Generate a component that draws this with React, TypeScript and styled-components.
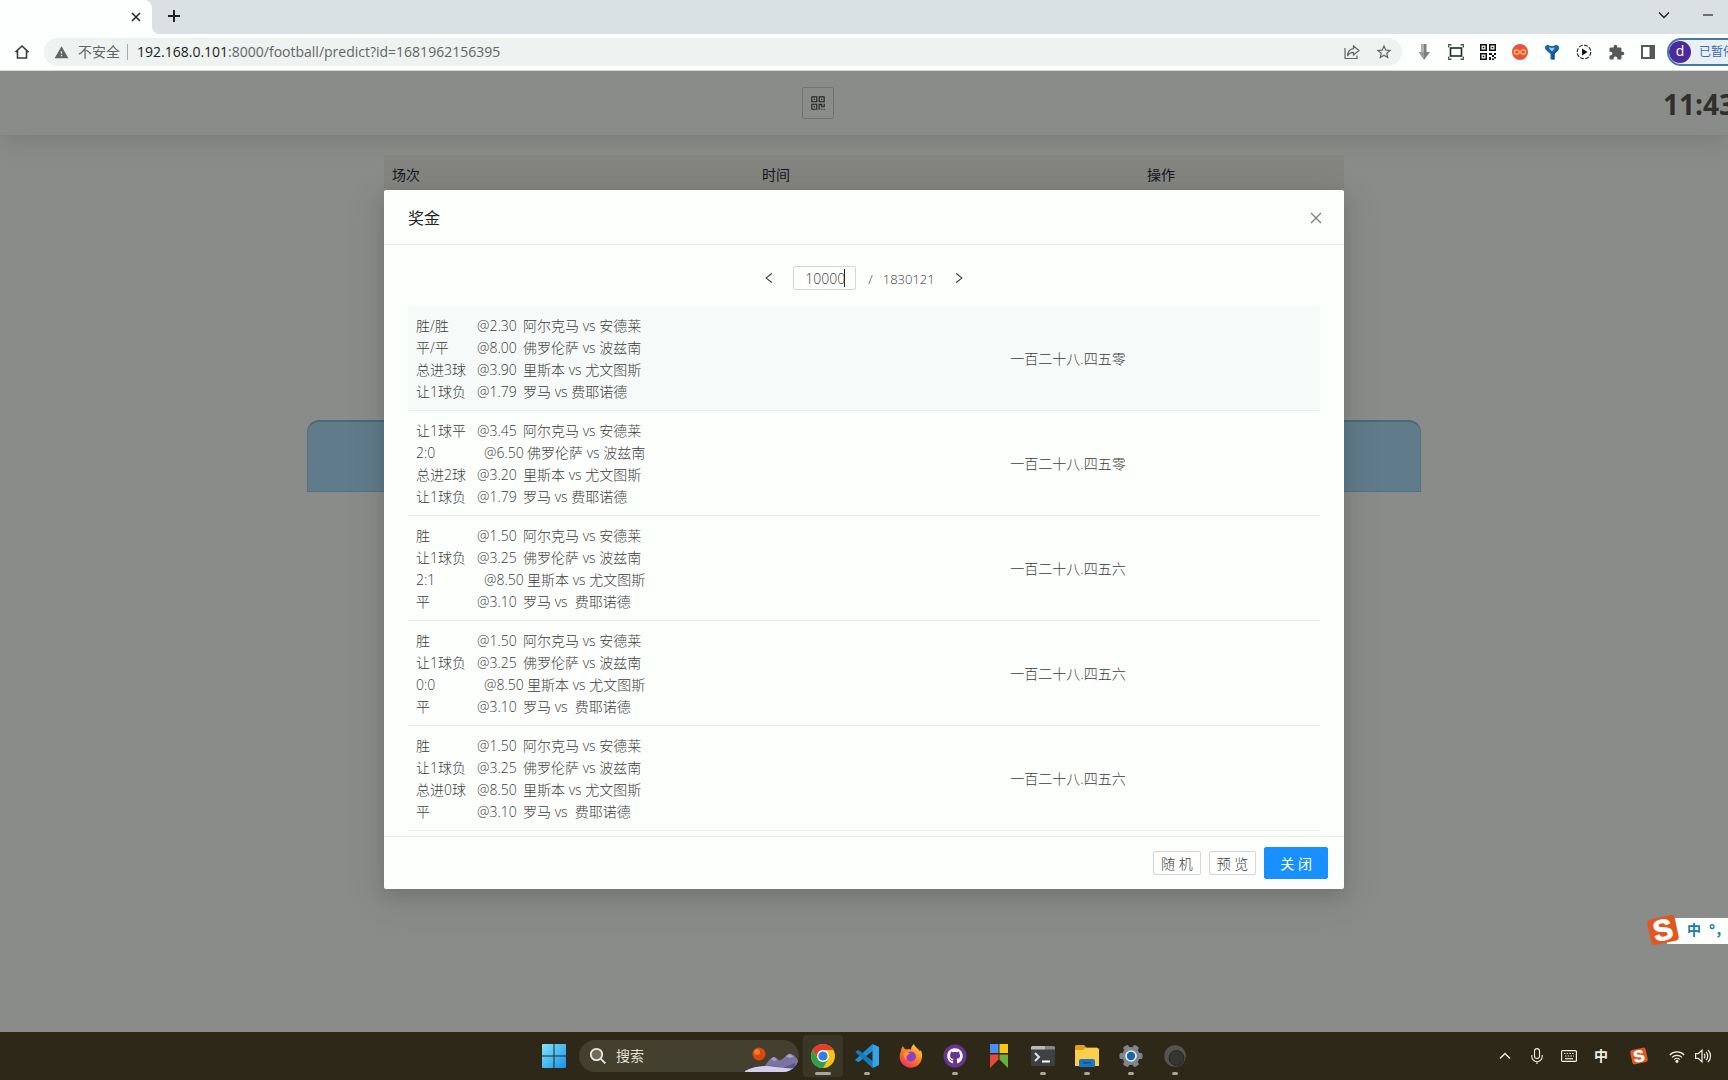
import React from "react";
import styled, { createGlobalStyle } from "styled-components";
import {
  AiOutlineClose,
  AiOutlineLeft,
  AiOutlineRight,
  AiOutlineQrcode,
} from "react-icons/ai";
import { MdExtension, MdWarning, MdStarBorder } from "react-icons/md";
import { FaGithub } from "react-icons/fa";

const GlobalStyle = createGlobalStyle`
  *, *::before, *::after { box-sizing: border-box; }
  body {
    margin: 0;
    overflow: hidden;
    font-family: "Open Sans", "Noto Sans CJK SC", sans-serif;
    font-size: 14px;
    line-height: 22px;
    color: #3a3c3a;
  }
  button, input { font: inherit; color: inherit; }
  svg { display: block; flex: none; overflow: visible; }
`;

const Screen = styled.div`
  display: flex;
  flex-direction: column;
  height: 100vh;
  overflow: hidden;
`;

/* Browser chrome */

const TabStrip = styled.div`
  display: flex;
  height: 34px;
  background: #dae1e4;
  color: #222;
`;

const Tab = styled.div`
  display: flex;
  align-items: center;
  justify-content: flex-end;
  width: 152px;
  padding-right: 9px;
  background: #fdfffe;
  border-radius: 0 8px 0 0;
`;

const TabFoot = styled.div`
  align-self: flex-end;
  width: 8px;
  height: 8px;
  background: radial-gradient(circle at 100% 0, #dae1e4 8px, #fdfffe 8px);
`;

const BareButton = styled.button<{ $w?: number }>`
  display: flex;
  align-items: center;
  justify-content: center;
  flex: none;
  width: ${(p) => p.$w ?? 32}px;
  height: 32px;
  padding: 0;
  border: 0;
  background: none;
`;

const WindowButtons = styled.div`
  display: flex;
  align-items: center;
  gap: 12px;
  margin-left: auto;
  margin-right: 4px;
  height: 30px;
`;

const Toolbar = styled.div`
  display: flex;
  align-items: center;
  height: 37px;
  padding-left: 6px;
  background: #fdfffe;
  border-bottom: 1px solid #d5d9d8;
  overflow: hidden;
`;

const AddressBar = styled.div`
  display: flex;
  align-items: center;
  flex: 1;
  height: 28px;
  margin-left: 6px;
  padding: 0 2px 0 10px;
  border-radius: 14px;
  background: #eef3f2;
  color: #5f6664;
  white-space: nowrap;
`;

const Insecure = styled.span`
  margin-left: 9px;
  padding-right: 7px;
  margin-right: 9px;
  border-right: 1px solid #a5aaa8;
  line-height: 16px;
`;

const Url = styled.span`
  flex: 1;
  b { font-weight: 400; color: #1c2220; }
`;

const Extensions = styled.div`
  display: flex;
  align-items: center;
  margin-left: 6px;
`;

const Profile = styled.button`
  display: flex;
  align-items: center;
  gap: 8px;
  flex: none;
  width: 61px;
  height: 28px;
  margin-left: 3px;
  padding: 0;
  border: 2px solid #4678a8;
  border-right: 0;
  border-radius: 14px 0 0 14px;
  background: #e8f0f6;
  color: #3e6ab4;
  font-size: 12px;
  white-space: nowrap;
  overflow: hidden;
`;

const Avatar = styled.span`
  flex: none;
  width: 22px;
  height: 22px;
  border-radius: 50%;
  background: #4c2a9c;
  color: #fff;
  font-size: 14px;
  line-height: 20px;
  text-align: center;
`;

/* Page */

const Page = styled.div`
  position: relative;
  flex: 1;
  overflow: hidden;
  background: #fafff8;
`;

const PageHeader = styled.header`
  display: grid;
  grid-template-columns: 802fr 32px 829fr 65px;
  align-items: center;
  height: 64px;
  box-shadow: 0 2px 28px rgba(0, 25, 15, 0.16);
`;

const QrButton = styled.button`
  grid-column: 2;
  display: flex;
  align-items: center;
  justify-content: center;
  width: 32px;
  height: 32px;
  padding: 0;
  border: 1px solid #d0d0cc;
  border-radius: 2px;
  background: none;
  color: #444;
`;

const Clock = styled.time`
  grid-column: 4;
  overflow: hidden;
  font-size: 28px;
  line-height: 36px;
  font-weight: 700;
  color: #5a544f;
  white-space: nowrap;
  margin-top: 2px;
`;

const MatchTable = styled.table`
  width: 960px;
  margin: 20px auto 0;
  border-collapse: collapse;
  table-layout: fixed;
  background: #f0f0eb;
  th {
    height: 38px;
    padding: 1px 8px 0;
    text-align: left;
    font-weight: 400;
    color: #222c38;
  }
`;

const Tile = styled.div`
  width: 1114px;
  height: 72px;
  margin: 227px auto 0;
  border: 1px solid #9dd0e8;
  border-top: 2px solid #86c0dc;
  border-radius: 12px 12px 0 0;
  background: #afe0fb;
`;

const Mask = styled.div`
  position: absolute;
  inset: 0;
  background: rgba(0, 0, 0, 0.45);
`;

const Modal = styled.section`
  width: 960px;
  margin: 119px auto 0;
  background: #fdfffd;
  border-radius: 2px;
  box-shadow: 0 6px 16px rgba(0, 0, 0, 0.1), 0 9px 36px 8px rgba(0, 0, 0, 0.08);
  font-weight: 300;
`;

const ModalHeader = styled.header`
  display: flex;
  align-items: center;
  justify-content: space-between;
  height: 55px;
  padding: 2px 12px 0 24px;
  border-bottom: 1px solid #ebedeb;
  color: #808280;
  h2 {
    margin: 0;
    font-size: 16px;
    font-weight: 400;
    color: #222;
  }
`;

const ModalBody = styled.div`
  padding: 21px 24px 5px;
`;

const Pager = styled.div`
  display: flex;
  align-items: center;
  justify-content: center;
  height: 24px;
  margin-bottom: 16px;
`;

const PageField = styled.label`
  position: relative;
  margin: 0 12px 0 8px;
  &::after {
    content: "";
    position: absolute;
    left: 51px;
    top: 3px;
    width: 1px;
    height: 18px;
    background: #222;
  }
  input {
    display: block;
    width: 63px;
    height: 24px;
    padding: 1px 10px 0 11px;
    border: 1px solid #d3d6d4;
    border-radius: 2px;
    background: none;
    outline: 0;
  }
`;

const Total = styled.span`
  display: flex;
  gap: 10px;
  margin-right: 8px;
  padding-top: 1px;
  font-size: 13px;
`;

const PrizeTable = styled.table`
  width: 100%;
  border-collapse: separate;
  border-spacing: 0;
  table-layout: fixed;
`;

const PrizeRow = styled.tr<{ $hover?: boolean }>`
  background: ${(p) => (p.$hover ? "#f6faf8" : "none")};
  td {
    padding: 9px 8px 7px;
    border-bottom: 1px solid #ebedeb;
  }
`;

const Amount = styled.td`
  text-align: center;
`;

const Bet = styled.div`
  display: flex;
  white-space: pre;
`;

const Pick = styled.span<{ $score: boolean }>`
  width: ${(p) => (p.$score ? 68 : 61)}px;
`;

const Odds = styled.span<{ $score: boolean }>`
  width: ${(p) => (p.$score ? 43 : 46)}px;
`;

const ModalFooter = styled.footer`
  display: flex;
  align-items: center;
  justify-content: flex-end;
  gap: 8px;
  padding: 10px 16px;
  border-top: 1px solid #ebedeb;
`;

const Action = styled.button<{ $primary?: boolean }>`
  height: ${(p) => (p.$primary ? 32 : 24)}px;
  padding: 1px ${(p) => (p.$primary ? 15 : 7)}px 0;
  border: 1px solid ${(p) => (p.$primary ? "#1890ff" : "#d3d6d4")};
  border-radius: 2px;
  background: ${(p) => (p.$primary ? "#1890ff" : "none")};
  color: ${(p) => (p.$primary ? "#fff" : "inherit")};
  font-weight: ${(p) => (p.$primary ? 400 : 300)};
  line-height: 20px;
  white-space: nowrap;
`;

const ImeBar = styled.div`
  position: absolute;
  right: 0;
  bottom: 86px;
  display: flex;
  align-items: center;
  gap: 8px;
  width: 81px;
  height: 32px;
  background: linear-gradient(#fdfffe, #fdfffe) 20px 4px / 61px 26px no-repeat;
  color: #1c78b4;
  font-weight: 700;
  white-space: nowrap;
`;

/* Taskbar */

const Taskbar = styled.footer`
  display: flex;
  align-items: center;
  height: 48px;
  padding-left: 532px;
  background: #2d2817;
  color: #f0eee6;
`;

const Search = styled.button`
  display: flex;
  align-items: center;
  width: 220px;
  height: 32px;
  margin: 0 2px 0 3px;
  padding: 0 0 0 10px;
  border: 0;
  border-radius: 16px;
  background: #434030;
  color: #e4e2d8;
  overflow: hidden;
  span { margin: 0 auto 0 9px; }
`;

const AppButton = styled.button<{ $state?: "open" | "active" }>`
  display: flex;
  align-items: center;
  justify-content: center;
  position: relative;
  flex: none;
  width: 40px;
  height: 42px;
  margin: 0 2px;
  padding: 0;
  border: 0;
  border-radius: 4px;
  background: ${(p) => (p.$state === "active" ? "#3b3727" : "none")};
  &::after {
    content: "";
    position: absolute;
    bottom: 2px;
    width: ${(p) => (p.$state === "active" ? 16 : p.$state ? 6 : 0)}px;
    height: 3px;
    border-radius: 2px;
    background: #a8a59a;
  }
`;

const Tray = styled.div`
  display: flex;
  align-items: center;
  margin-left: auto;
  margin-right: 15px;
`;

const ImeMode = styled.span`
  width: 32px;
  text-align: center;
  font-weight: 700;
`;

/* Drawings */

const line = { fill: "none", stroke: "currentColor" } as const;

const HomeIcon = () => (
  <svg width="16" height="16" viewBox="0 0 16 16" {...line} strokeWidth="1.6">
    <path d="M1.500 8.200 8 2l6.500 6.200M3.500 7v7h9V7" />
  </svg>
);

const ShareIcon = () => (
  <svg width="16" height="16" viewBox="0 0 16 16" {...line} strokeWidth="1.200">
    <path d="M1 4v10.500h12v-3M9.500 2l5.500 4.500L9.500 11V8.300C6.500 8.300 4.800 9.500 3.500 12 3.800 7.500 6 5 9.500 4.700Z" />
  </svg>
);

const ArrowDownIcon = () => (
  <svg width="12" height="16" viewBox="0 0 12 16">
    <path fill="#b0b2b1" d="M3 0h4v8H3z" />
    <path fill="#7d807f" d="M6 0h2.500v8H12l-6 8z" />
    <path fill="#979a99" d="M3 8H.5L6 16V8z" />
  </svg>
);

const CaptureIcon = () => (
  <svg width="16" height="16" viewBox="0 0 16 16" fill="none">
    <rect x="2.500" y="4" width="11" height="8" stroke="#1f2b22" strokeWidth="1.600" />
    <path d="M.7 3.500V.7h2.800M12.500.7h2.800v2.800M15.300 12.500v2.800h-2.800M3.500 15.300H.7v-2.800" stroke="#3f6b46" strokeWidth="1.400" />
  </svg>
);

const QrIcon = () => (
  <svg width="16" height="16" viewBox="0 0 16 16" fill="#111">
    <path fillRule="evenodd" d="M0 0h7v7H0zM1.500 1.500v4h4v-4zM9 0h7v7H9zM10.500 1.500v4h4v-4zM0 9h7v7H0zM1.500 10.500v4h4v-4z" />
    <path d="M2.700 2.700h1.600v1.600H2.700zM11.700 2.700h1.600v1.600h-1.600zM2.700 11.700h1.600v1.600H2.700zM9 9h3v2H9zM12 11h2v2h-2zM14 9h2v2h-2zM9 13h2v3H9zM14 13h2v1.500h-2zM12 14.500h2V16h-2z" />
  </svg>
);

const InfinityIcon = () => (
  <svg width="16" height="16" viewBox="0 0 16 16" fill="none">
    <circle cx="8" cy="8" r="8" fill="#ea4f47" />
    <path d="M8 8C6.500 6 5.500 5.700 4.700 5.700a2.300 2.300 0 0 0 0 4.600C5.500 10.300 6.500 10 8 8s2.500-2.300 3.300-2.300a2.300 2.300 0 0 1 0 4.600C10.500 10.300 9.500 10 8 8Z" stroke="#ffb84a" strokeWidth="1.500" />
  </svg>
);

const YIcon = () => (
  <svg width="16" height="16" viewBox="0 0 16 16">
    <path fill="#1c64a8" d="M1 3C2 .8 4 .8 5.500 1.500 7 2.500 9 2.500 10.500 1.500 12 .8 14 .8 15 3c.8 2.500-2 4.500-4.500 7v5.500h-4V10C4 7.500.2 5.500 1 3Z" />
    <path fill="#8fd0f0" d="M5 3c1 .7 2 1 3 1s1.700-.3 2.500-.8c0 1.600-1 3-2.500 4-1.500-1-3-2.400-3-4.200Z" />
    <path fill="#174a80" d="M8.500 10c2-2 4-3.500 6-5.500-.5 2-2.500 3.500-4 5.500v5.500h-2Z" />
  </svg>
);

const PlayIcon = () => (
  <svg width="16" height="16" viewBox="0 0 16 16">
    <circle cx="8" cy="8" r="6.800" fill="none" stroke="#222" strokeWidth="1.100" strokeDasharray="4 1.300" />
    <path d="M6 4.500 11.500 8 6 11.500Z" fill="#111" />
  </svg>
);

const SidePanelIcon = () => (
  <svg width="14" height="14" viewBox="0 0 14 14">
    <path fill="#555a58" fillRule="evenodd" d="M0 0h14v14H0zM2 2v10h6.500V2z" />
  </svg>
);

const CrossIcon = () => (
  <svg width="10" height="10" viewBox="0 0 10 10" {...line} strokeWidth="1.500">
    <path d="m1 1 8 8M9 1 1 9" />
  </svg>
);

const PlusIcon = () => (
  <svg width="12" height="12" viewBox="0 0 12 12" {...line} strokeWidth="2">
    <path d="M6 0v12M0 6h12" />
  </svg>
);

const ChevronIcon = ({ up = false }: { up?: boolean }) => (
  <svg width="12" height="12" viewBox="0 0 12 12" {...line} strokeWidth="1.400">
    <path d={up ? "m1 8.500 5-5 5 5" : "m1 3.500 5 5 5-5"} />
  </svg>
);

const MinimizeIcon = () => (
  <svg width="10" height="10" viewBox="0 0 10 10" {...line} strokeWidth="1.200">
    <path d="M0 5h10" />
  </svg>
);

const SogouIcon = ({ size }: { size: number }) => (
  <svg width={size} height={size} viewBox="0 0 32 32">
    <g transform="rotate(-12 16 16)">
      <rect x="2" y="3" width="28" height="26" rx="4" fill="#e2571f" />
      <text x="16" y="26" textAnchor="middle" fill="#fff" stroke="#fff" strokeWidth="1" fontFamily="Liberation Sans, sans-serif" fontWeight="700" fontSize="29">S</text>
    </g>
  </svg>
);

const WindowsIcon = () => (
  <svg width="24" height="24" viewBox="0 0 24 24">
    <defs>
      <linearGradient id="win" x2="1" y2="1">
        <stop stopColor="#7fe6fb" />
        <stop offset="1" stopColor="#1590ea" />
      </linearGradient>
    </defs>
    <path fill="url(#win)" d="M1 0h10.500v11.500H0V1a1 1 0 0 1 1-1zM12.500 0H23a1 1 0 0 1 1 1v10.500H12.500zM0 12.500h11.500V24H1a1 1 0 0 1-1-1zM12.500 12.500H24V23a1 1 0 0 1-1 1H12.500z" />
  </svg>
);

const SearchIcon = () => (
  <svg width="18" height="18" viewBox="0 0 18 18" fill="#6f6c60" stroke="#eceade" strokeWidth="1.800">
    <circle cx="7.500" cy="7.500" r="5.700" />
    <path d="m11.800 11.800 4.500 4.500" />
  </svg>
);

const SearchArt = () => (
  <svg width="56" height="32" viewBox="0 0 56 32">
    <circle cx="16" cy="14" r="6.500" fill="#d9480f" />
    <circle cx="14" cy="12" r="3" fill="#f07d2c" />
    <path fill="#7a74a4" d="M20 28c4-4 7-11 11-11 3 0 4 4 7 3 4-2 6-7 10-6 5 1 7 8 9 8v10H20Z" />
    <path fill="#a7a2cc" d="m28 19 3-2 3 3-3 1zM43 16l4-2 4 3-5 1z" />
    <path fill="#d3d0ec" d="M2 31c10-5 20-6 30-4 6 1 13 0 19 1l-6 4H2Z" />
    <path fill="#5c568c" d="M22 26c8-2 14 2 20 1l10-4v5c-8 2-20-3-30-2Z" />
  </svg>
);

const ChromeIcon = () => (
  <svg width="24" height="24" viewBox="0 0 24 24">
    <circle cx="12" cy="12" r="12" fill="#fbc116" />
    <path fill="#e33b2e" d="M1.600 6A12 12 0 0 1 22.400 6H12a6 6 0 0 0-5.200 9Z" />
    <path fill="#2da04b" d="M1.600 6A12 12 0 0 0 12 24l5.200-9A6 6 0 0 1 6.800 15Z" />
    <circle cx="12" cy="12" r="5.900" fill="#fff" />
    <circle cx="12" cy="12" r="4.600" fill="#2f7de9" />
  </svg>
);

const CodeIcon = () => (
  <svg width="24" height="24" viewBox="0 0 24 24">
    <path fill="#1f8fd4" d="M17.500 0 18 6.500 3.500 18.200 0 16z" />
    <path fill="#1678bd" d="M17.500 24 18 17.500 3.200 5.800.3 8z" />
    <path fill="#2ea6ec" d="M17.500 0 24 3v18l-6.500 3z" />
  </svg>
);

const FirefoxIcon = () => (
  <svg width="24" height="24" viewBox="0 0 24 24">
    <defs>
      <linearGradient id="fox" x1="0.900" y1="0" x2="0.200" y2="1">
        <stop stopColor="#ffe14a" />
        <stop offset="0.450" stopColor="#ff8a1f" />
        <stop offset="1" stopColor="#ee2a63" />
      </linearGradient>
    </defs>
    <path fill="url(#fox)" d="M2 7c0-2 1-4 2-5 .5 2 1.500 2.800 3 3.500 2-.5 3.500-.5 5 0 0-2 1-4 3-5.500.5 3 4 4 6 7.500.5-.5.6-1 .5-2C24 10 23.500 15 21 19c-4 6-13 6-17.500 1C0 16 0 11 2 7Z" />
    <circle cx="12" cy="12.500" r="5" fill="#8a3fd1" />
    <path fill="#ff9a2e" d="M5 9c2-1 5-1 6 .5-1.500.3-2 1.300-3 2.300-1 1.200-1 2.700 0 4C5 15 4 12 5 9Z" />
  </svg>
);

const GithubIcon = () => (
  <svg width="24" height="24" viewBox="0 0 24 24">
    <circle cx="12" cy="12" r="11.500" fill="#6b3391" />
    <FaGithub x="4" y="4" width="16" height="16" size={16} color="#fff" />
  </svg>
);

const FlagIcon = () => (
  <svg width="18" height="24" viewBox="0 0 18 24">
    <path fill="#4a8df6" d="M0 0h8.500v9H0z" />
    <path fill="#fcc419" d="M9.500 0H18v9H9.500z" />
    <path fill="#e8483a" d="M0 10.500h8.500v5L0 24z" />
    <path fill="#6cae3c" d="M9.500 10.500H18V24l-8.500-8.500z" />
  </svg>
);

const TerminalIcon = () => (
  <svg width="24" height="20" viewBox="0 0 24 20" fill="none">
    <rect width="24" height="20" rx="1.500" fill="#3d4143" />
    <path fill="#b9bbb9" d="M1.500 0h13v3.500H0v-2A1.500 1.500 0 0 1 1.500 0Z" />
    <path fill="#85888a" d="M14.500 0h8A1.500 1.500 0 0 1 24 1.500v2h-9.500z" />
    <path d="m4 7 4 4-4 4" stroke="#dfe2e2" strokeWidth="2" />
    <path d="M11 15.500h8" stroke="#fff" strokeWidth="2" />
  </svg>
);

const FolderIcon = () => (
  <svg width="24" height="22" viewBox="0 0 24 22">
    <path fill="#e0a01c" d="M1.500 0H9l2.500 2.500H22V8H0V1.500A1.500 1.500 0 0 1 1.500 0Z" />
    <path fill="#fbcf4a" d="M10 3h12.500A1.500 1.500 0 0 1 24 4.500V21H0V5h8Z" />
    <path fill="#1976c4" d="M6 14h12a2 2 0 0 1 2 2v6H4v-6a2 2 0 0 1 2-2Z" />
    <path fill="#0f4f8c" d="M8 17h8v1.500H8z" />
  </svg>
);

const GearIcon = () => (
  <svg width="24" height="24" viewBox="0 0 24 24">
    <g fill="#7d868b">
      <circle cx="12" cy="12" r="9" />
      {[30, 90, 150].map((a) => (
        <rect key={a} x="9" y="0.500" width="6" height="23" rx="1.500" transform={`rotate(${a} 12 12)`} />
      ))}
    </g>
    <circle cx="12" cy="12" r="5.800" fill="#e9f1f6" />
    <circle cx="12" cy="12" r="4.200" fill="#1a64ad" />
  </svg>
);

const OrbIcon = () => (
  <svg width="22" height="22" viewBox="0 0 22 22">
    <circle cx="11" cy="11" r="10.800" fill="#545450" />
    <circle cx="12.500" cy="13" r="7.500" fill="#343430" stroke="#242420" />
  </svg>
);

const MicIcon = () => (
  <svg width="12" height="16" viewBox="0 0 12 16" {...line} strokeWidth="1.100">
    <rect x="3.500" y="0.600" width="5" height="10" rx="2.500" />
    <path d="M.8 7v1.500a5.200 5.200 0 0 0 10.400 0V7M6 13.500V16" />
  </svg>
);

const KeyboardIcon = () => (
  <svg width="16" height="12" viewBox="0 0 16 12" {...line} strokeWidth="1.200">
    <rect x="0.600" y="0.600" width="14.800" height="10.800" rx="1" />
    <path d="M3 3.500h10M4 6h9" strokeDasharray="1.500 1.200" />
    <path d="M4 8.700h8" />
  </svg>
);

const WifiIcon = () => (
  <svg width="16" height="13" viewBox="0 0 16 13" {...line} strokeWidth="1.200">
    <path d="M.8 5a10 10 0 0 1 14.400 0M3 7.400a7 7 0 0 1 10 0M5.200 9.600a4 4 0 0 1 5.600 0" />
    <circle cx="8" cy="11.300" r="1" fill="currentColor" />
  </svg>
);

const VolumeIcon = () => (
  <svg width="17" height="14" viewBox="0 0 17 14" {...line} strokeWidth="1.200">
    <path d="M.6 4.700h2.600L7 1.200v11.600L3.200 9.300H.6ZM9 4.800a3 3 0 0 1 0 4.400M11 2.800a6 6 0 0 1 0 8.400M13 .8a9 9 0 0 1 0 12.400" />
  </svg>
);

/* Data */

type BetLine = [pick: string, odds: string, match: string];

const A = "阿尔克马 vs 安德莱";
const B = "佛罗伦萨 vs 波兹南";
const C = "里斯本 vs 尤文图斯";
const D = "罗马 vs 费耶诺德";
const D_WIDE = "罗马 vs  费耶诺德";

const prizes: { bets: BetLine[]; amount: string }[] = [
  {
    bets: [["胜/胜", "2.30", A], ["平/平", "8.00", B], ["总进3球", "3.90", C], ["让1球负", "1.79", D]],
    amount: "一百二十八.四五零",
  },
  {
    bets: [["让1球平", "3.45", A], ["2:0", "6.50", B], ["总进2球", "3.20", C], ["让1球负", "1.79", D]],
    amount: "一百二十八.四五零",
  },
  {
    bets: [["胜", "1.50", A], ["让1球负", "3.25", B], ["2:1", "8.50", C], ["平", "3.10", D_WIDE]],
    amount: "一百二十八.四五六",
  },
  {
    bets: [["胜", "1.50", A], ["让1球负", "3.25", B], ["0:0", "8.50", C], ["平", "3.10", D_WIDE]],
    amount: "一百二十八.四五六",
  },
  {
    bets: [["胜", "1.50", A], ["让1球负", "3.25", B], ["总进0球", "8.50", C], ["平", "3.10", D_WIDE]],
    amount: "一百二十八.四五六",
  },
];

const extensions = [
  { name: "下载", icon: <ArrowDownIcon /> },
  { name: "截图", icon: <CaptureIcon /> },
  { name: "二维码", icon: <QrIcon /> },
  { name: "循环", icon: <InfinityIcon /> },
  { name: "助手", icon: <YIcon /> },
  { name: "播放", icon: <PlayIcon /> },
  { name: "扩展程序", icon: <MdExtension size={17} color="#555a58" /> },
  { name: "侧边栏", icon: <SidePanelIcon /> },
];

const apps: { name: string; icon: React.ReactNode; state?: "open" | "active" }[] = [
  { name: "Chrome", icon: <ChromeIcon />, state: "active" },
  { name: "VS Code", icon: <CodeIcon />, state: "open" },
  { name: "Firefox", icon: <FirefoxIcon /> },
  { name: "GitHub", icon: <GithubIcon />, state: "open" },
  { name: "工具", icon: <FlagIcon /> },
  { name: "终端", icon: <TerminalIcon />, state: "open" },
  { name: "文件", icon: <FolderIcon />, state: "open" },
  { name: "设置", icon: <GearIcon />, state: "open" },
  { name: "录屏", icon: <OrbIcon />, state: "open" },
];

function BrowserChrome() {
  return (
    <>
      <TabStrip>
        <Tab>
          <BareButton $w={14} aria-label="关闭标签页"><CrossIcon /></BareButton>
        </Tab>
        <TabFoot />
        <BareButton $w={28} aria-label="新标签页"><PlusIcon /></BareButton>
        <WindowButtons>
          <BareButton aria-label="搜索标签页"><ChevronIcon /></BareButton>
          <BareButton aria-label="最小化"><MinimizeIcon /></BareButton>
        </WindowButtons>
      </TabStrip>
      <Toolbar>
        <BareButton aria-label="主页"><HomeIcon /></BareButton>
        <AddressBar>
          <MdWarning size={15} />
          <Insecure>不安全</Insecure>
          <Url><b>192.168.0.101</b>:8000/football/predict?id=1681962156395</Url>
          <BareButton aria-label="分享"><ShareIcon /></BareButton>
          <BareButton aria-label="收藏"><MdStarBorder size={18} /></BareButton>
        </AddressBar>
        <Extensions>
          {extensions.map((e) => (
            <BareButton key={e.name} aria-label={e.name}>{e.icon}</BareButton>
          ))}
        </Extensions>
        <Profile>
          <Avatar>d</Avatar>
          已暂停
        </Profile>
      </Toolbar>
    </>
  );
}

function PrizeModal() {
  return (
    <Modal role="dialog" aria-labelledby="prize-title">
      <ModalHeader>
        <h2 id="prize-title">奖金</h2>
        <BareButton aria-label="关闭对话框"><AiOutlineClose size={16} /></BareButton>
      </ModalHeader>
      <ModalBody>
        <Pager>
          <BareButton aria-label="上一页"><AiOutlineLeft size={14} /></BareButton>
          <PageField>
            <input aria-label="页码" defaultValue="10000" />
          </PageField>
          <Total><span>/</span><span>1830121</span></Total>
          <BareButton aria-label="下一页"><AiOutlineRight size={14} /></BareButton>
        </Pager>
        <PrizeTable>
          <colgroup>
            <col width="408" />
            <col />
          </colgroup>
          <tbody>
            {prizes.map((p, i) => (
              <PrizeRow key={i} $hover={i === 0}>
                <td>
                  {p.bets.map(([pick, odds, match], j) => {
                    const score = pick.includes(":");
                    return (
                      <Bet key={j}>
                        <Pick $score={score}>{pick}</Pick>
                        <Odds $score={score}>@{odds}</Odds>
                        <span>{match}</span>
                      </Bet>
                    );
                  })}
                </td>
                <Amount>{p.amount}</Amount>
              </PrizeRow>
            ))}
          </tbody>
        </PrizeTable>
      </ModalBody>
      <ModalFooter>
        <Action>随 机</Action>
        <Action>预 览</Action>
        <Action $primary>关 闭</Action>
      </ModalFooter>
    </Modal>
  );
}

export default function App() {
  return (
    <Screen>
      <GlobalStyle />
      <BrowserChrome />
      <Page>
        <PageHeader>
          <QrButton aria-label="二维码"><AiOutlineQrcode size={18} /></QrButton>
          <Clock>11:43</Clock>
        </PageHeader>
        <MatchTable>
          <colgroup>
            <col width="370" />
            <col width="385" />
            <col />
          </colgroup>
          <thead>
            <tr><th>场次</th><th>时间</th><th>操作</th></tr>
          </thead>
        </MatchTable>
        <Tile />
        <Mask>
          <PrizeModal />
        </Mask>
        <ImeBar>
          <SogouIcon size={32} />
          <span>中</span>
          <span>°，</span>
        </ImeBar>
      </Page>
      <Taskbar>
        <BareButton $w={44} aria-label="开始"><WindowsIcon /></BareButton>
        <Search>
          <SearchIcon />
          <span>搜索</span>
          <SearchArt />
        </Search>
        {apps.map((a) => (
          <AppButton key={a.name} $state={a.state} aria-label={a.name}>{a.icon}</AppButton>
        ))}
        <Tray>
          <BareButton aria-label="显示隐藏的图标"><ChevronIcon up /></BareButton>
          <BareButton aria-label="麦克风"><MicIcon /></BareButton>
          <BareButton aria-label="键盘"><KeyboardIcon /></BareButton>
          <ImeMode>中</ImeMode>
          <BareButton $w={44} aria-label="输入法"><SogouIcon size={18} /></BareButton>
          <BareButton aria-label="网络"><WifiIcon /></BareButton>
          <BareButton $w={20} aria-label="音量"><VolumeIcon /></BareButton>
        </Tray>
      </Taskbar>
    </Screen>
  );
}
